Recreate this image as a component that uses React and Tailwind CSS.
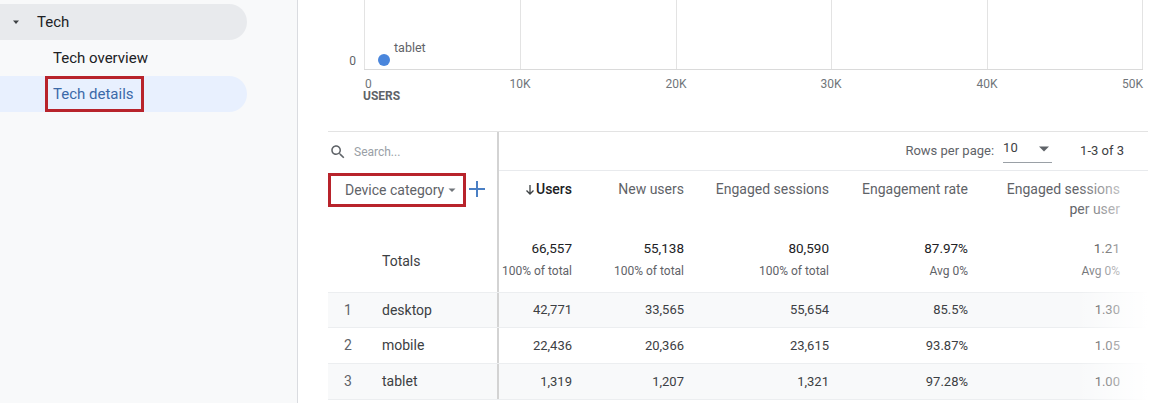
import React from "react";

const rows = [
  { n: 1, name: "desktop", v: ["42,771", "33,565", "55,654", "85.5%", "1.30"], bg: "bg-[#f8f9fa]", h: "h-[35px]" },
  { n: 2, name: "mobile", v: ["22,436", "20,366", "23,615", "93.87%", "1.05"], bg: "bg-white", h: "h-[36px]" },
  { n: 3, name: "tablet", v: ["1,319", "1,207", "1,321", "97.28%", "1.00"], bg: "bg-[#f8f9fa]", h: "h-[36px]" },
];

const colW = ["w-[85px]", "w-[112px]", "w-[145px]", "w-[139px]", "w-[152px]"];

function Chart() {
  const grid = [66, 222, 378, 533, 689, 844];
  const labels = ["0", "10K", "20K", "30K", "40K", "50K"];
  return (
    <svg width="853" height="131" className="block" style={{ fontFamily: "Roboto, sans-serif" }}>
      {grid.map((x, i) => (
        <line key={i} x1={x + 0.5} y1="0" x2={x + 0.5} y2="69" stroke="#e3e3e3" strokeWidth="1" />
      ))}
      <line x1="66" y1="69.5" x2="845" y2="69.5" stroke="#dadada" strokeWidth="1" />
      <text x="58" y="65" textAnchor="end" fontSize="12" fill="#5f6368">0</text>
      <circle cx="86" cy="60" r="6" fill="#4a86dc" />
      <text x="96" y="52" fontSize="12.5" fill="#5f6368">tablet</text>
      {labels.map((l, i) => (
        <text
          key={l}
          x={i === 0 ? 67 : i === 5 ? 845 : grid[i]}
          y="88"
          fontSize="12"
          textAnchor={i === 0 ? "start" : i === 5 ? "end" : "middle"}
          fill="#70757a"
        >
          {l}
        </text>
      ))}
      <text x="65" y="100" fontSize="12" fontWeight="700" fill="#5f6368">USERS</text>
    </svg>
  );
}

function SearchIcon() {
  return (
    <svg width="18" height="18" viewBox="0 0 24 24" fill="#5f6368">
      <path d="M15.5 14h-.79l-.28-.27C15.41 12.59 16 11.11 16 9.5 16 5.91 13.09 3 9.5 3S3 5.91 3 9.5 5.91 16 9.5 16c1.61 0 3.09-.59 4.23-1.57l.27.28v.79l5 4.99L20.49 19l-4.99-5zm-6 0C7.01 14 5 11.99 5 9.5S7.01 5 9.5 5 14 7.01 14 9.5 11.99 14 9.5 14z" />
    </svg>
  );
}

export default function App() {
  return (
    <div className="flex w-[1151px] h-[403px] overflow-hidden bg-white font-['Roboto',sans-serif]">
      <aside className="w-[298px] shrink-0 bg-[#f8f9fa] border-r border-[#dadce0] pt-1">
        <div className="h-9 w-[247px] rounded-r-full bg-[#e8eaed] flex items-center">
          <svg width="10" height="10" viewBox="0 0 10 10" className="ml-[11px]">
            <path d="M2 3.5h6L5 7z" fill="#3c4043" />
          </svg>
          <span className="ml-[16px] text-[15px] text-[#202124]">Tech</span>
        </div>
        <div className="h-9 flex items-center pl-[53px] text-[15px] text-[#202124]">Tech overview</div>
        <div className="h-9 w-[247px] rounded-r-full bg-[#e8f0fe] flex items-center">
          <div className="ml-[45px] h-9 w-[99px] border-[3px] border-[#b8232b] flex items-center pl-[5px] text-[15px] text-[#3b69a8]">
            Tech details
          </div>
        </div>
      </aside>

      <main className="flex-1 flex flex-col">
        <Chart />
        <div className="relative ml-[30px] w-[820px] border-t border-[#e3e3e3]">
          {/* search row */}
          <div className="flex h-[39px]">
            <div className="w-[171px] shrink-0 border-r-2 border-[#d3d3d3] flex items-center gap-[7px] pl-[1px]">
              <SearchIcon />
              <span className="text-[12px] text-[#9aa0a6]">Search...</span>
            </div>
            <div className="flex-1 border-b border-[#e8eaed] flex items-center justify-end pr-[24px] text-[13px] text-[#5f6368]">
              <span>Rows per page:</span>
              <div className="ml-[9px] w-[49px] h-[24px] border-b border-[#9aa0a6] flex items-start justify-between pr-[3px]">
                <span className="text-[#3c4043] leading-[18px]">10</span>
                <svg width="10" height="10" viewBox="0 0 10 10" className="mt-[5px]">
                  <path d="M0 2.5h10L5 7.5z" fill="#5f6368" />
                </svg>
              </div>
              <span className="ml-[28px] text-[#3c4043]">1-3 of 3</span>
            </div>
          </div>

          {/* header row */}
          <div className="flex h-[59px]">
            <div className="w-[171px] shrink-0 border-r-2 border-[#d3d3d3] flex items-start pt-[2px]">
              <div className="h-[34px] w-[138px] border-[3px] border-[#b8232b] flex items-center pl-[14px] text-[14px] text-[#5f6368]">
                Device category
                <svg width="10" height="10" viewBox="0 0 10 10" className="ml-[3px]">
                  <path d="M1.5 3.5h7L5 7z" fill="#70757a" />
                </svg>
              </div>
              <svg width="18" height="18" viewBox="0 0 18 18" className="ml-[2px] mt-[7px]">
                <path d="M9 1v16M1 9h16" stroke="#4a7fc4" strokeWidth="2" />
              </svg>
            </div>
            <div className="flex text-[14px] leading-[20px] text-[#5f6368]">
              <div className={`${colW[0]} pr-[12px] pt-[8px] text-right text-[#202124] font-medium flex justify-end items-start`}>
                <svg width="10" height="12" viewBox="0 0 10 12" className="mt-[5px] mr-[1px]">
                  <path d="M5 1v9M1.5 6.5L5 10l3.5-3.5" stroke="#3c4043" strokeWidth="1.3" fill="none" />
                </svg>
                Users
              </div>
              <div className={`${colW[1]} pr-[12px] pt-[8px] text-right`}>New users</div>
              <div className={`${colW[2]} pr-[12px] pt-[8px] text-right`}>Engaged sessions</div>
              <div className={`${colW[3]} pr-[12px] pt-[8px] text-right`}>Engagement rate</div>
              <div className={`${colW[4]} pr-[12px] pt-[8px] text-right`}>Engaged sessions<br />per user</div>
            </div>
          </div>

          {/* totals row */}
          <div className="flex h-[63px] border-b border-[#eceef0]">
            <div className="w-[171px] shrink-0 border-r-2 border-[#d3d3d3] flex items-center pl-[54px] text-[14px] text-[#3c4043]">
              Totals
            </div>
            <div className="flex">
              {[
                ["66,557", "100% of total"],
                ["55,138", "100% of total"],
                ["80,590", "100% of total"],
                ["87.97%", "Avg 0%"],
                ["1.21", "Avg 0%"],
              ].map(([v, s], i) => (
                <div key={i} className={`${colW[i]} pr-[12px] pt-[9px] text-right`}>
                  <div className="text-[13.5px] leading-[18px] text-[#202124]">{v}</div>
                  <div className="mt-[5px] text-[12px] leading-[18px] text-[#5f6368]">{s}</div>
                </div>
              ))}
            </div>
          </div>

          {rows.map((r) => (
            <div key={r.n} className={`flex ${r.h} ${r.bg} border-b border-[#eceef0]`}>
              <div className="w-[171px] shrink-0 border-r-2 border-[#d3d3d3] flex items-center text-[14px] text-[#3c4043]">
                <span className="w-[54px] pl-[16px] text-[#5f6368]">{r.n}</span>
                <span>{r.name}</span>
              </div>
              <div className="flex items-center text-[13px] text-[#3c4043]">
                {r.v.map((v, i) => (
                  <div key={i} className={`${colW[i]} pr-[12px] text-right`}>{v}</div>
                ))}
              </div>
            </div>
          ))}

          <div className="absolute right-0 top-[40px] bottom-0 w-[72px] bg-linear-to-r from-white/0 via-white/50 to-white pointer-events-none" />
        </div>
      </main>
    </div>
  );
}
